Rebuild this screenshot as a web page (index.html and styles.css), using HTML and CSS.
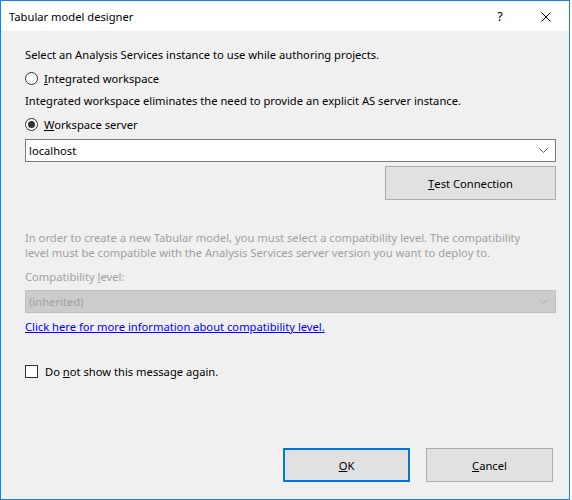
FILE: index.html
```html
<!DOCTYPE html>
<html>
<head>
<meta charset="utf-8">
<link rel="stylesheet" href="styles.css">
</head>
<body>
<div class="window">
  <div class="titlebar">
    <span class="title">Tabular model designer</span>
    <span class="tb-btn help">?</span>
    <span class="tb-btn close">
      <svg width="10" height="10" viewBox="0 0 10 10"><path d="M0.5 0.5L9.5 9.5M9.5 0.5L0.5 9.5" stroke="#000" stroke-width="1" fill="none"/></svg>
    </span>
  </div>
  <div class="content">
    <p class="line intro">Select an Analysis Services instance to use while authoring projects.</p>
    <div class="option opt1"><span class="radio"></span><span><u>I</u>ntegrated workspace</span></div>
    <p class="line note">Integrated workspace eliminates the need to provide an explicit AS server instance.</p>
    <div class="option opt2"><span class="radio checked"></span><span><u>W</u>orkspace server</span></div>
    <div class="combo">
      <span class="combo-text">localhost</span>
      <svg class="chev" width="9" height="5" viewBox="0 0 9 5"><path d="M0.5 0.5L4.5 4.5L8.5 0.5" stroke="#606060" fill="none"/></svg>
    </div>
    <div class="test-row"><div class="btn test"><u>T</u>est Connection</div></div>
    <p class="disabled para">In order to create a new Tabular model, you must select a compatibility level. The compatibility<br>level must be compatible with the Analysis Services server version you want to deploy to.</p>
    <p class="disabled label">Compatibility <u>l</u>evel:</p>
    <div class="combo combo-disabled">
      <span class="combo-text">(inherited)</span>
      <svg class="chev" width="9" height="5" viewBox="0 0 9 5"><path d="M0.5 0.5L4.5 4.5L8.5 0.5" stroke="#adadad" fill="none"/></svg>
    </div>
    <a class="link" href="#">Click here for more information about compatibility level.</a>
    <div class="option check-row"><span class="checkbox"></span><span>Do <u>n</u>ot show this message again.</span></div>
    <div class="footer">
      <div class="btn ok"><u>O</u>K</div>
      <div class="btn cancel"><u>C</u>ancel</div>
    </div>
  </div>
</div>
</body>
</html>
```
FILE: styles.css
```css
* { box-sizing: border-box; }
html, body { margin: 0; padding: 0; background: #ffffff; }
body {
  font-family: "Segoe UI", "Noto Sans", sans-serif;
  font-size: 11.2px;
  line-height: 15px;
  color: #000;
}
.window {
  width: 570px;
  height: 500px;
  border: 1px solid #1883d7;
  background: #f0f0f0;
  display: flex;
  flex-direction: column;
}
.titlebar {
  height: 30px;
  background: #fff;
  display: flex;
  align-items: center;
  padding-left: 8px;
  flex: none;
}
.title { flex: 1; }
.tb-btn {
  width: 46px;
  height: 30px;
  display: flex;
  align-items: center;
  justify-content: center;
}
.help { font-size: 12.5px; padding-top: 1px; }
.close { padding-top: 1px; }
.content {
  flex: 1;
  display: flex;
  flex-direction: column;
  padding: 16px 13px 17px 24px;
}
p { margin: 0; line-height: 15px; }
.option {
  display: flex;
  align-items: center;
  height: 16px;
  gap: 6px;
}
.opt1 { margin-top: 8px; }
.note { margin-top: 7px; }
.opt2 { margin-top: 8px; }
.radio {
  width: 13px;
  height: 13px;
  border: 1px solid #333;
  border-radius: 50%;
  background: #fff;
  display: flex;
  align-items: center;
  justify-content: center;
}
.radio.checked::after {
  content: "";
  width: 7px;
  height: 7px;
  border-radius: 50%;
  background: #333;
}
.checkbox {
  width: 13px;
  height: 13px;
  border: 1px solid #333;
  background: #fff;
  margin-right: 1px;
}
.combo {
  margin-top: 7px;
  height: 23px;
  border: 1px solid #7a7a7a;
  background: #fff;
  display: flex;
  align-items: center;
  padding: 0 7px 0 3px;
}
.combo-text { flex: 1; }
.test-row { display: flex; justify-content: flex-end; margin-top: 4px; }
.btn {
  background: #e1e1e1;
  border: 1px solid #adadad;
  display: flex;
  align-items: center;
  justify-content: center;
}
.test { width: 171px; height: 34px; }
.disabled { color: #a0a0a0; }
.para { margin-top: 30px; }
.label { margin-top: 9px; }
.combo-disabled {
  margin-top: 6px;
  background: #cccccc;
  border-color: #bfbfbf;
  color: #a0a0a0;
}
.link {
  margin-top: 6px;
  color: #0000ff;
  line-height: 15px;
  align-self: flex-start;
}
.check-row { margin-top: 29px; }
.footer {
  margin-top: auto;
  display: flex;
  justify-content: flex-end;
  gap: 16px;
  padding-right: 3px;
}
.ok, .cancel { width: 127px; height: 34px; }
.ok { border: 2px solid #0078d7; }
```
